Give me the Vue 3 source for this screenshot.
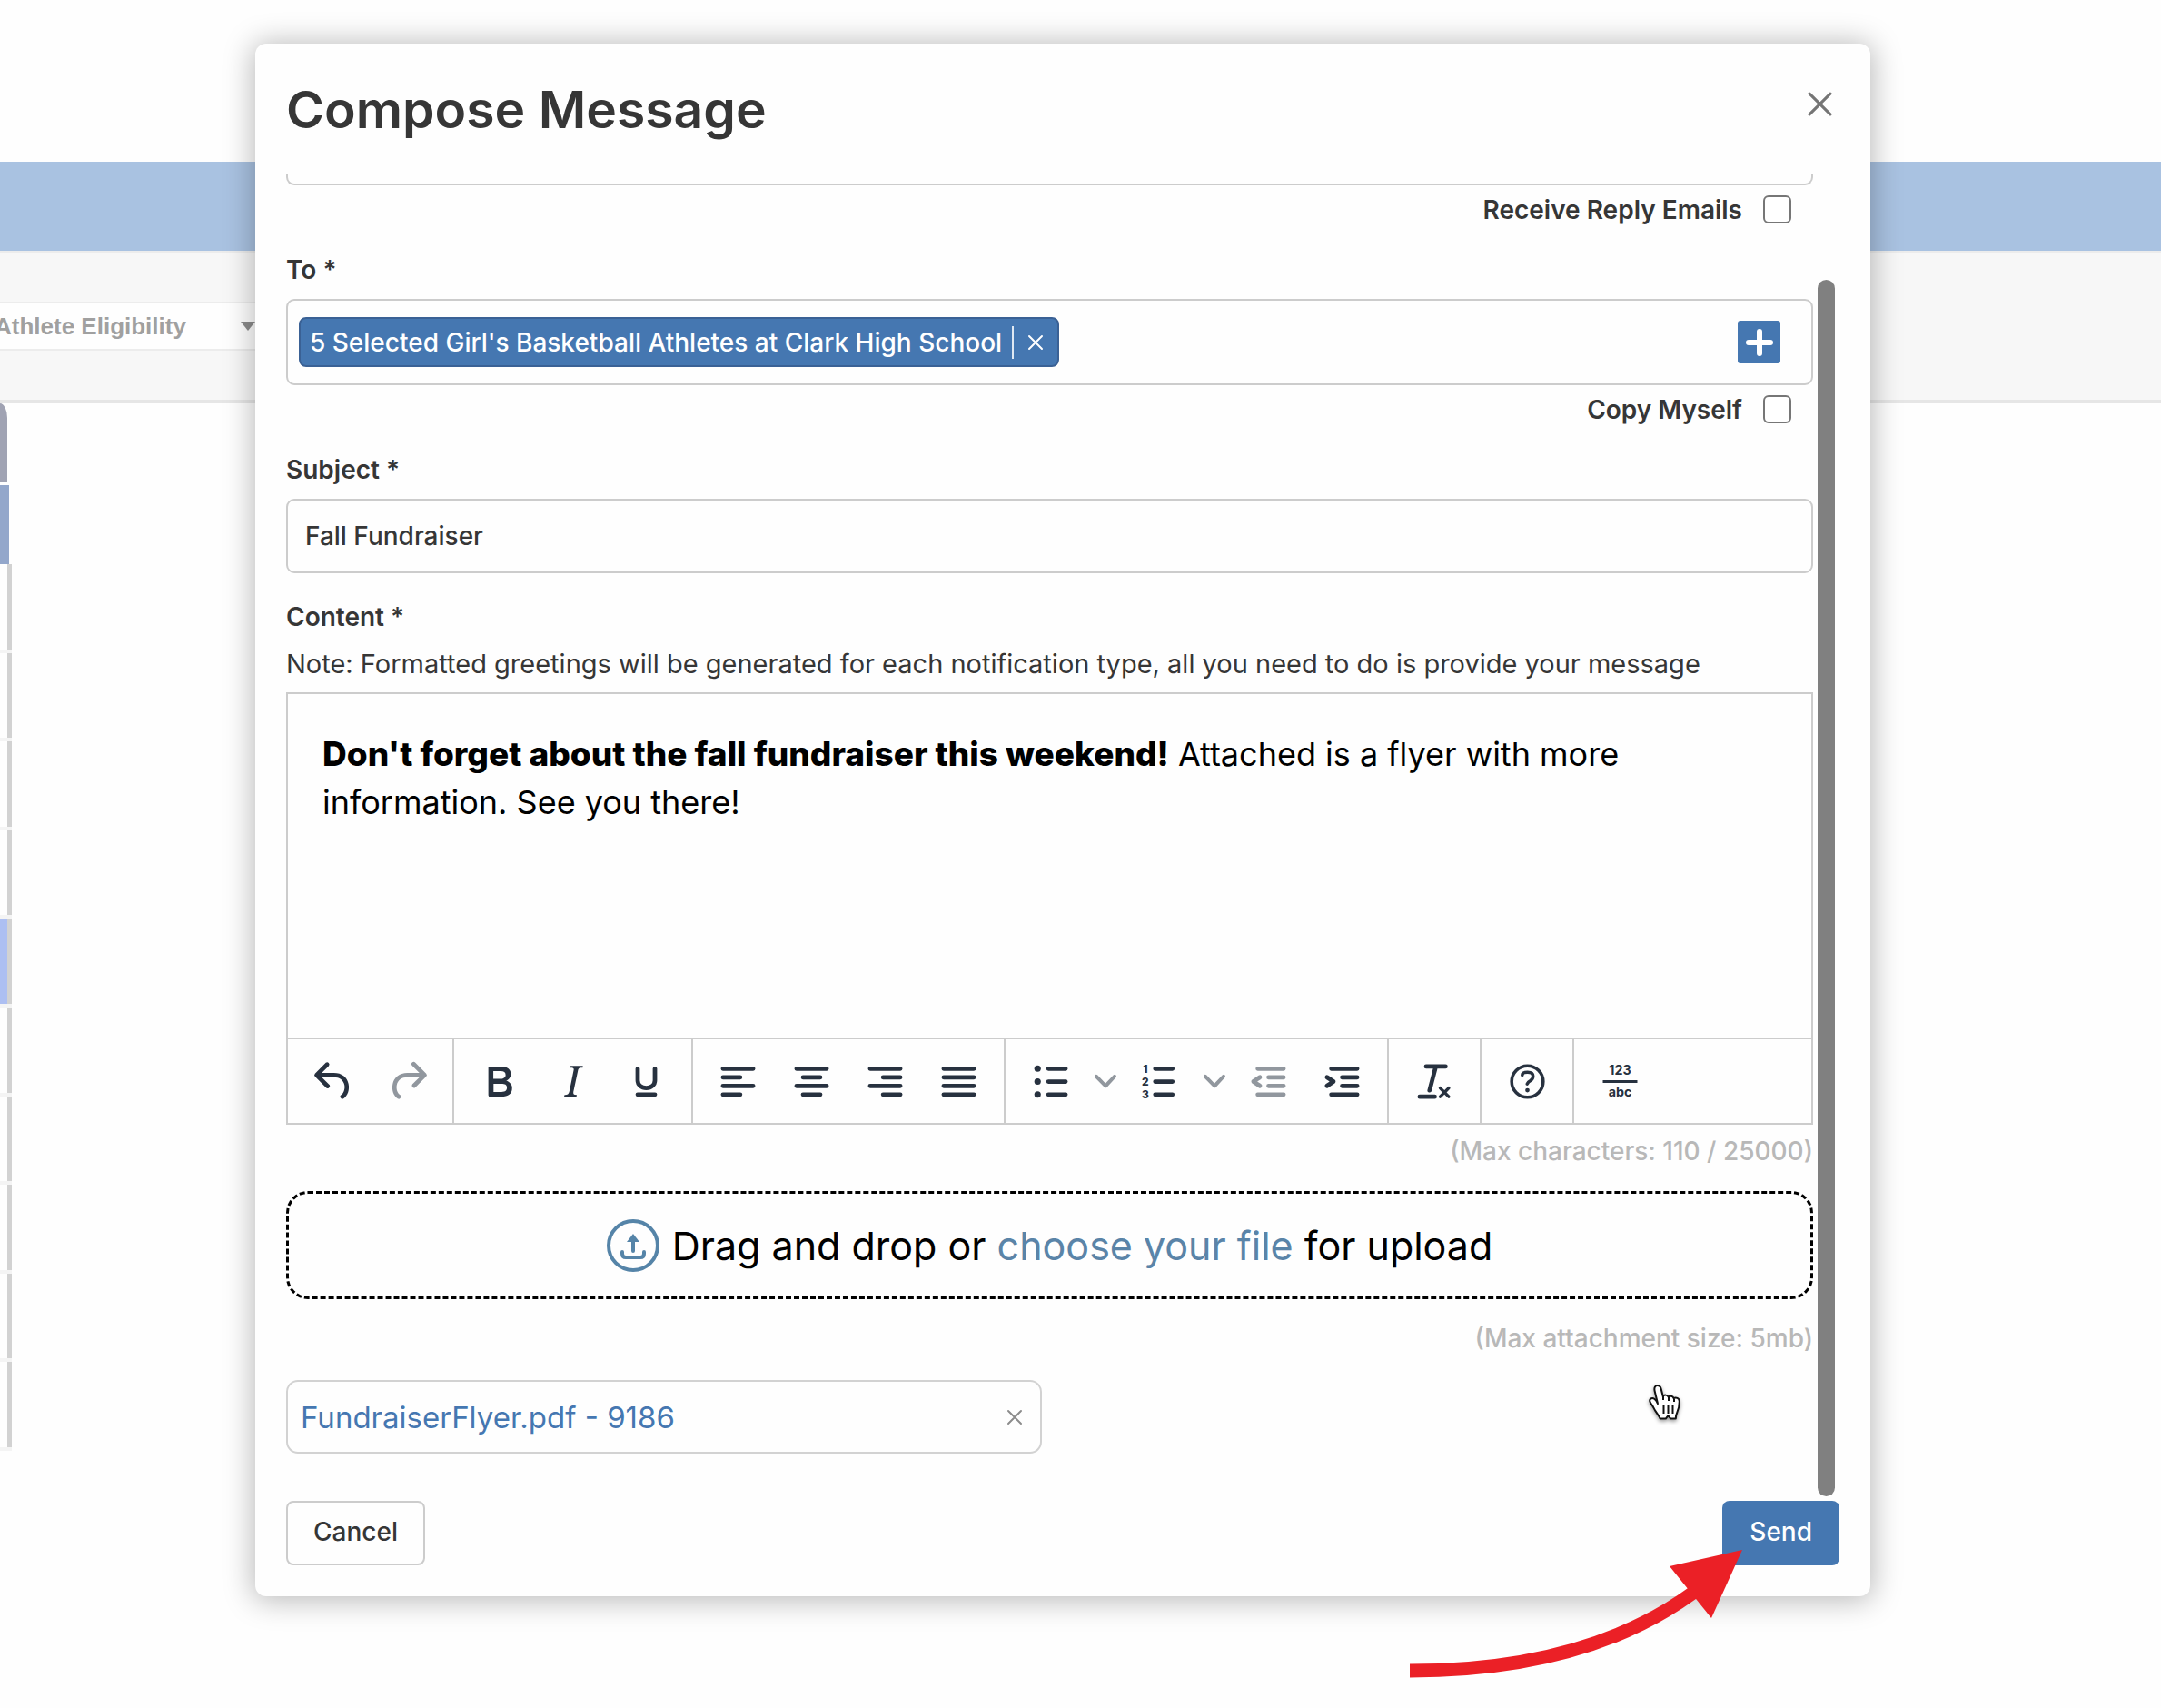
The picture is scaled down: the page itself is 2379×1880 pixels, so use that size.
<script setup>
import { ref } from 'vue'

const receiveReplies = ref(false)
const copyMyself = ref(false)
const subject = ref('Fall Fundraiser')
const eligibility = ref('Athlete Eligibility')

const rosterRows = [1, 2, 3, 4, 5, 6, 7, 8, 9, 10]
const selectedRow = 5

const stroke = (rows) => rows.map(([x1, x2, y]) => `M${x1} ${y}H${x2}`).join('')

const undo = 'M6.4 8H12c3.7 0 6.2 2 6.8 5.1.6 2.7-.4 5.6-2.3 6.8a1 1 0 0 1-1-1.8c1.1-.6 1.8-2.7 1.4-4.6-.5-2.1-2.1-3.5-4.9-3.5H6.4l3.3 3.3a1 1 0 1 1-1.4 1.4l-5-5a1 1 0 0 1 0-1.4l5-5a1 1 0 0 1 1.4 1.4L6.4 8Z'
const redo = 'M17.6 10H12c-2.8 0-4.4 1.4-4.9 3.5-.4 2 .3 4 1.4 4.6a1 1 0 1 1-1 1.8c-2-1.2-2.9-4.1-2.3-6.8.6-3 3-5.1 6.8-5.1h5.6l-3.3-3.3a1 1 0 1 1 1.4-1.4l5 5a1 1 0 0 1 0 1.4l-5 5a1 1 0 0 1-1.4-1.4l3.3-3.3Z'
const bold = 'M7.8 19c-.3 0-.5 0-.6-.2l-.2-.5V5.7c0-.2 0-.4.2-.5l.6-.2h5c1.5 0 2.7.3 3.5 1 .7.6 1.1 1.4 1.1 2.5a3 3 0 0 1-.6 1.9c-.4.6-1 1-1.6 1.2.4.1.9.3 1.3.6s.8.7 1 1.2c.4.4.5 1 .5 1.6 0 1.3-.4 2.3-1.3 3-.8.7-2.1 1-3.8 1H7.8Zm5-8.3c.6 0 1.2-.1 1.6-.5.4-.3.6-.7.6-1.3 0-1.1-.8-1.7-2.3-1.7H9.3v3.5h3.4Zm.5 6c.7 0 1.3-.1 1.7-.4.4-.4.6-.9.6-1.5s-.2-1-.7-1.4c-.4-.3-1-.4-2-.4H9.4v3.8h4Z'
const italic = 'm16.7 4.7-.1.9h-.3c-.6 0-1 0-1.4.3-.3.3-.4.6-.5 1.1l-2.1 9.8v.6c0 .5.4.8 1.4.8h.2l-.2.8H8l.2-.8h.2c1.1 0 1.8-.5 2-1.5l2-9.8.1-.5c0-.6-.4-.8-1.4-.8h-.3l.2-.9h5.8Z'
const outdentArrow = 'M8.6 13.2a1 1 0 0 1-1.2 1.6l-3-2a1 1 0 0 1 0-1.6l3-2a1 1 0 0 1 1.2 1.6L6.8 12l1.8 1.2Z'
const indentArrow = 'M4.4 13.2 6.2 12l-1.8-1.2a1 1 0 0 1 1.2-1.6l3 2a1 1 0 0 1 0 1.6l-3 2a1 1 0 1 1-1.2-1.6Z'
const clearFormat = 'M13.2 6a1 1 0 0 1 0 .2l-2.6 10a1 1 0 0 1-1 .8h-.2a.8.8 0 0 1-.8-1l2.6-10H8a1 1 0 1 1 0-2h9a1 1 0 0 1 0 2h-3.8ZM5 18h7a1 1 0 0 1 0 2H5a1 1 0 0 1 0-2Zm13 1.5L16.5 18 15 19.5a.7.7 0 0 1-1-1l1.5-1.5-1.5-1.5a.7.7 0 0 1 1-1l1.5 1.5 1.5-1.5a.7.7 0 0 1 1 1L17.5 17l1.5 1.5a.7.7 0 0 1-1 1Z'
const chevron = 'M8.7 2.2c.3-.3.8-.3 1 0 .4.4.4.9 0 1.2L5.7 7.8c-.3.3-.9.3-1.2 0L.2 3.4a.8.8 0 0 1 0-1.2c.3-.3.8-.3 1.1 0L5 6l3.7-3.8Z'

const dent = stroke([[7, 19, 6], [12, 19, 10], [12, 19, 14], [7, 19, 18]])

const groups = [
  [
    { label: 'Undo', fill: undo },
    { label: 'Redo', fill: redo, dim: true },
  ],
  [
    { label: 'Bold', fill: bold },
    { label: 'Italic', fill: italic },
    { label: 'Underline', line: 'M8 6v5.5c0 2 1.700 3.500 4 3.500s4-1.500 4-3.500V6M8 18h8' },
  ],
  [
    { label: 'Align left', line: stroke([[5, 19, 6], [5, 13, 10], [5, 19, 14], [5, 13, 18]]) },
    { label: 'Align center', line: stroke([[5, 19, 6], [8, 16, 10], [5, 19, 14], [8, 16, 18]]) },
    { label: 'Align right', line: stroke([[5, 19, 6], [11, 19, 10], [5, 19, 14], [11, 19, 18]]) },
    { label: 'Justify', line: stroke([[5, 19, 6], [5, 19, 10], [5, 19, 14], [5, 19, 18]]) },
  ],
  [
    { label: 'Bullet list', line: stroke([[11, 19, 6], [11, 19, 12], [11, 19, 18]]), dots: [6, 12, 18] },
    { label: 'Bullet list options', menu: true },
    { label: 'Numbered list', line: stroke([[10, 18, 6], [10, 18, 12], [10, 18, 18]]), digits: [1, 2, 3] },
    { label: 'Numbered list options', menu: true },
    { label: 'Decrease indent', line: dent, fill: outdentArrow, dim: true },
    { label: 'Increase indent', line: dent, fill: indentArrow },
  ],
  [{ label: 'Clear formatting', fill: clearFormat }],
  [{ label: 'Help', help: true }],
  [{ label: 'Word count', count: true }],
]
</script>

<template>
  <div class="page">
    <div class="backdrop" aria-hidden="true">
      <div class="banner"></div>
      <div class="filters">
        <div class="filter">
          <select v-model="eligibility" tabindex="-1" aria-label="Filter">
            <option>Athlete Eligibility</option>
          </select>
          <svg class="caret" viewBox="0 0 16 10"><path d="M0 0h16L8 10z" /></svg>
        </div>
      </div>
      <div class="roster">
        <div class="roster-tab"></div>
        <div class="roster-head"></div>
        <div class="roster-rows">
          <div v-for="row in rosterRows" :key="row" class="roster-row" :class="{ selected: row === selectedRow }"></div>
        </div>
      </div>
    </div>

    <section class="dialog" role="dialog" aria-labelledby="dialog-title">
      <header class="head">
        <h1 id="dialog-title">Compose Message</h1>
        <button type="button" class="icon-btn close" aria-label="Close">
          <svg viewBox="0 0 26 26"><path d="M2 2l22 22M24 2 2 24" /></svg>
        </button>
      </header>

      <div class="body">
        <form class="form" @submit.prevent>
          <div class="cut-field"></div>
          <label class="check">
            Receive Reply Emails
            <input v-model="receiveReplies" type="checkbox" />
          </label>

          <span id="to-label" class="label">To *</span>
          <div class="recipients" role="group" aria-labelledby="to-label">
            <span class="chip">
              <span class="chip-text">5 Selected Girl's Basketball Athletes at Clark High School</span>
              <button type="button" class="icon-btn remove" aria-label="Remove recipient">
                <svg viewBox="0 0 18 18"><path d="M2 2l14 14M16 2 2 16" /></svg>
              </button>
            </span>
            <button type="button" class="add" aria-label="Add recipients">
              <svg viewBox="0 0 30 30"><path d="M15 3v24M3 15h24" /></svg>
            </button>
          </div>
          <label class="check">
            Copy Myself
            <input v-model="copyMyself" type="checkbox" />
          </label>

          <label class="label" for="subject">Subject *</label>
          <input id="subject" v-model="subject" class="text-input" type="text" />

          <span id="content-label" class="label content-label">Content *</span>
          <p class="note">Note: Formatted greetings will be generated for each notification type, all you need to do is provide your message</p>

          <div class="editor">
            <div class="editor-text" contenteditable="true" role="textbox" aria-multiline="true" aria-labelledby="content-label" spellcheck="false"><strong>Don't forget about the fall fundraiser this weekend!</strong> Attached is a flyer with more information. See you there!</div>
            <div class="toolbar" role="toolbar">
              <div v-for="(group, g) in groups" :key="g" class="group">
                <button
                  v-for="tool in group"
                  :key="tool.label"
                  type="button"
                  class="tool"
                  :class="{ dim: tool.dim, menu: tool.menu }"
                  :aria-label="tool.label"
                >
                  <svg v-if="tool.menu" class="chevron" viewBox="0 0 10 10"><path :d="chevron" /></svg>
                  <svg v-else class="glyph" viewBox="0 0 24 24">
                    <path v-if="tool.fill" :d="tool.fill" />
                    <path v-if="tool.line" class="line" :d="tool.line" />
                    <template v-if="tool.dots">
                      <circle v-for="y in tool.dots" :key="y" cx="6" :cy="y" r="1.5" />
                    </template>
                    <template v-if="tool.digits">
                      <text v-for="n in tool.digits" :key="n" class="digit" x="5.4" :y="n * 6 + 1.8">{{ n }}</text>
                    </template>
                    <template v-if="tool.help">
                      <circle class="ring" cx="12" cy="12" r="7.3" />
                      <path class="hook" d="M9.6 9c0-.8 1-1.3 2.5-1.3s2.5.6 2.5 1.8c0 1.1-.4 1.6-1.2 2.1-.7.4-1.2.8-1.5 1.5" />
                      <circle cx="12" cy="16" r="1" />
                    </template>
                    <template v-if="tool.count">
                      <text class="count" x="12" y="9">123</text>
                      <path d="M4 11.4h16v1.2H4z" />
                      <text class="count" x="12" y="19">abc</text>
                    </template>
                  </svg>
                </button>
              </div>
            </div>
          </div>
          <p class="limit">(Max characters: 110 / 25000)</p>

          <div class="dropzone">
            <svg class="upload" viewBox="0 0 58 58">
              <circle cx="29" cy="29" r="27" />
              <path d="M29 35V20M17 36v2q0 4 4 4h16q4 0 4-4v-2" />
              <path class="tip" d="M29 16l7 9H22z" />
            </svg>
            <span>Drag and drop or <a href="#">choose your file</a> for upload</span>
          </div>
          <p class="limit size-limit">(Max attachment size: 5mb)</p>

          <div class="attachment">
            <a href="#">FundraiserFlyer.pdf - 9186</a>
            <button type="button" class="icon-btn detach" aria-label="Remove attachment">
              <svg viewBox="0 0 18 18"><path d="M2 2l14 14M16 2 2 16" /></svg>
            </button>
          </div>
        </form>
        <div class="scrollbar"></div>
      </div>

      <footer class="foot">
        <button type="button" class="btn cancel">Cancel</button>
        <button type="button" class="btn send">Send</button>
      </footer>

      <svg class="pointer" viewBox="0 0 40 44" aria-hidden="true">
        <path
          class="hand"
          d="M12 22L8.6 8c-.8-3.600.6-6 3-6s3.600 1.600 4.200 4.200l2 8c1-2.200 4.800-2.200 6 .6 1.400-1.800 4.800-1.400 5.800 1.400 2.200-1.400 6.200-.4 6.200 3.400 0 6-.6 8.400-2.600 12.400-1 2-1.400 3.400-1.400 6.600h-5.600l-2.800-3.400-2.600 3.400h-6.200c-.8-3-3-5.200-5-8.200-1.800-2.600-2.600-5.400-4.600-7.800-1.800-2.200-2.600-4.600-.8-6 2.600-1.800 5.600.4 7.800 5.400z"
        />
        <path class="lines" d="M18 14v4M24 15v4M30 17v3M18.500 24v9M23.500 24v9M28.500 24v9" />
      </svg>
      <svg class="arrow" viewBox="0 0 368 142" aria-hidden="true">
        <path class="shaft" d="M0 133Q194 133 312 47" />
        <path class="arrowhead" d="M366 0 286 18l46 57z" />
      </svg>
    </section>
  </div>
</template>

<style>
body {
  margin: 0;
  background: #fefefe;
}
</style>

<style scoped>
.page {
  position: relative;
  min-height: 100vh;
  overflow: hidden;
  font-family: Inter, "Liberation Sans", sans-serif;
  font-size: 28px;
  line-height: 40px;
  color: #363636;
}
button,
input,
select {
  font: inherit;
  color: inherit;
  margin: 0;
}
button {
  padding: 0;
  border: 0;
  background: none;
}
p,
h1 {
  margin: 0;
}
a {
  text-decoration: none;
}

/* Page behind the dialog */
.backdrop {
  padding-top: 178px;
}
.banner {
  height: 98px;
  background: #a9c2e1;
}
.filters {
  padding: 54px 0;
  border-top: 2px solid #ececec;
  border-bottom: 4px solid #e6e6e6;
  background: #f7f7f7;
}
.filter {
  display: flex;
  align-items: center;
  width: 296px;
  height: 54px;
  border: solid #ececec;
  border-width: 2px 0;
  box-sizing: border-box;
  background: #fefefe;
}
.filter select {
  width: 265px;
  height: 50px;
  padding: 0;
  border: 0;
  appearance: none;
  background: none;
  text-indent: -6px;
  font: bold 26px "Liberation Sans", Arial, sans-serif;
  color: #a0a0a0;
}
.caret {
  width: 16px;
  height: 10px;
  fill: #8c8c8c;
}
.roster {
  width: 13px;
}
.roster-tab {
  width: 8px;
  height: 86px;
  border-top-right-radius: 8px 16px;
  background: #a0a3b3;
}
.roster-head {
  width: 10px;
  height: 87px;
  margin-top: 4px;
  background: #93a7cb;
}
.roster-rows {
  display: grid;
  grid-auto-rows: 1fr;
  height: 976px;
}
.roster-row {
  border-bottom: 4px solid #f4f4f4;
  background: linear-gradient(90deg, #fefefe 8px, #d2d2d2 8px);
}
.roster-row.selected {
  background: linear-gradient(90deg, #adbff2 8px, #d2d2d2 8px);
}

/* Dialog */
.dialog {
  position: absolute;
  top: 48px;
  left: 281px;
  right: 320px;
  box-sizing: border-box;
  padding: 0 34px 34px;
  border-radius: 12px;
  background: #fefefe;
  box-shadow: 0 2px 32px 3px rgba(0, 0, 0, 0.27);
}
.head {
  display: flex;
  align-items: center;
  justify-content: space-between;
  height: 144px;
}
h1 {
  padding-top: 2px;
  font-size: 57px;
  line-height: 72px;
  font-weight: 600;
}
.icon-btn {
  display: flex;
  flex: none;
}
.icon-btn svg {
  width: 18px;
  height: 18px;
  fill: none;
  stroke: currentColor;
  stroke-width: 2;
  stroke-linecap: round;
}
.close {
  margin: 0 8px 11px;
  color: #757575;
}
.close svg {
  width: 27px;
  height: 27px;
  stroke-width: 3;
}
.body {
  display: flex;
  gap: 5px;
  padding-right: 5px;
}
.form {
  display: flex;
  flex: 1;
  flex-direction: column;
  min-width: 0;
}
.scrollbar {
  width: 19px;
  margin: 116px 0 -47px;
  border-radius: 10px;
  background: #808080;
}
.cut-field {
  height: 10px;
  border: 2px solid #ccc;
  border-top: 0;
  border-radius: 0 0 9px 9px;
}
.check {
  display: flex;
  align-items: center;
  align-self: flex-end;
  gap: 23px;
  height: 31px;
  margin: 11px 24px 31px 0;
  font-weight: 600;
}
.check input {
  width: 31px;
  height: 31px;
  border: 2px solid #767676;
  border-radius: 6px;
  appearance: none;
  background: #fff;
}
.label {
  margin-bottom: 12px;
  font-weight: 600;
}
.recipients {
  display: flex;
  align-items: center;
  justify-content: space-between;
  height: 95px;
  box-sizing: border-box;
  padding: 0 34px 0 12px;
  border: 2px solid #ccc;
  border-radius: 9px;
}
.chip {
  display: flex;
  align-items: center;
  height: 55px;
  box-sizing: border-box;
  border: 2px solid #3a6195;
  border-radius: 8px;
  background: #4577b1;
  color: #fff;
}
.chip-text {
  padding: 0 11px 0 10px;
  border-right: 2px solid #dfe8f2;
  line-height: 36px;
  font-weight: 500;
}
.remove {
  padding: 0 15px;
}
.add {
  display: flex;
  align-items: center;
  justify-content: center;
  width: 47px;
  height: 47px;
  border-radius: 3px;
  background: #4577b1;
}
.add svg {
  width: 30px;
  height: 30px;
  fill: none;
  stroke: #fff;
  stroke-width: 6;
  stroke-linecap: round;
}
.text-input {
  height: 82px;
  box-sizing: border-box;
  padding: 0 19px;
  border: 2px solid #ccc;
  border-radius: 9px;
  background: #fefefe;
  font-weight: 500;
}
.content-label {
  margin-top: 28px;
}
.note {
  margin-bottom: 11px;
  font-size: 29px;
}
.editor {
  border: 2px solid #ccc;
}
.editor-text {
  height: 302px;
  padding: 39px 130px 37px 38px;
  outline: 0;
  font-size: 36px;
  line-height: 53px;
  color: #000;
}
.editor-text strong {
  font-size: 37px;
  font-weight: 800;
}
.toolbar {
  display: flex;
  height: 92px;
  padding-left: 1px;
  border-top: 2px solid #ccc;
}
.group {
  display: flex;
  padding: 0 9px;
  border-right: 2px solid #ccc;
}
.group:last-child {
  border-right: 0;
}
.tool {
  display: flex;
  align-items: center;
  justify-content: center;
  width: 81px;
  color: #27313f;
}
.tool:only-child {
  width: 82px;
}
.tool.menu {
  width: 39px;
}
.tool.dim,
.tool.menu {
  color: #91979e;
}
.glyph {
  width: 57px;
  height: 57px;
  fill: currentColor;
}
.chevron {
  width: 24px;
  height: 24px;
  fill: currentColor;
}
.line {
  fill: none;
  stroke: currentColor;
  stroke-width: 2;
  stroke-linecap: round;
}
.ring,
.hook {
  fill: none;
  stroke: currentColor;
  stroke-width: 1.5;
  stroke-linecap: round;
}
.digit {
  font-size: 5px;
  font-weight: 800;
  text-anchor: middle;
}
.count {
  font-size: 6px;
  font-weight: 700;
  text-anchor: middle;
}
.limit {
  margin-top: 9px;
  text-align: right;
  font-weight: 500;
  color: #b8b8b8;
}
.dropzone {
  display: flex;
  align-items: center;
  justify-content: center;
  gap: 14px;
  height: 119px;
  box-sizing: border-box;
  margin-top: 24px;
  border: 3px dashed #000;
  border-radius: 24px;
  font-size: 43px;
  line-height: 60px;
  color: #000;
}
.dropzone a {
  color: #5a84a8;
}
.upload {
  width: 58px;
  height: 58px;
  fill: none;
  stroke: #5584a8;
  stroke-width: 4;
  stroke-linecap: round;
}
.upload .tip {
  fill: #5584a8;
  stroke: none;
}
.size-limit {
  margin-top: 23px;
}
.attachment {
  display: flex;
  align-items: center;
  justify-content: space-between;
  width: 832px;
  max-width: 100%;
  height: 81px;
  box-sizing: border-box;
  margin-top: 26px;
  padding: 0 19px 0 14px;
  border: 2px solid #d2d2d2;
  border-radius: 13px;
  font-size: 33px;
}
.attachment a {
  color: #4577b1;
}
.detach {
  color: #8c8c8c;
}
.foot {
  display: flex;
  justify-content: space-between;
  margin-top: 52px;
}
.btn {
  height: 71px;
  box-sizing: border-box;
  padding: 0 30px 4px;
  border-radius: 8px;
  font-weight: 500;
}
.cancel {
  padding: 0 28px 4px;
  border: 2px solid #ccc;
}
.send {
  background: #4577b1;
  color: #fff;
}

/* Annotation and mouse pointer lie over the dialog */
.pointer {
  position: absolute;
  right: 206px;
  bottom: 190px;
  width: 40px;
  height: 44px;
  filter: drop-shadow(0 2px 2px rgba(0, 0, 0, 0.4));
}
.hand {
  fill: #fff;
  stroke: #111;
  stroke-width: 2;
  stroke-linejoin: round;
}
.lines {
  fill: none;
  stroke: #111;
  stroke-width: 2;
}
.arrow {
  position: absolute;
  right: 139px;
  bottom: -91px;
  width: 368px;
  height: 142px;
  overflow: visible;
}
.shaft {
  fill: none;
  stroke: #eb2026;
  stroke-width: 15;
}
.arrowhead {
  fill: #eb2026;
}
</style>
